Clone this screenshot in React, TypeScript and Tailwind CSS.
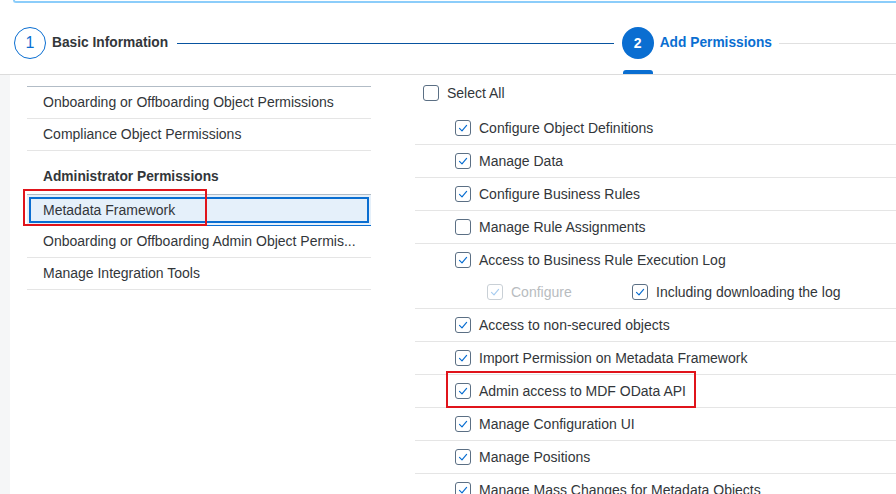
import React from "react";

type Perm = { label: string; checked: boolean; sub?: boolean; boxed?: boolean };

const perms: Perm[] = [
  { label: "Configure Object Definitions", checked: true },
  { label: "Manage Data", checked: true },
  { label: "Configure Business Rules", checked: true },
  { label: "Manage Rule Assignments", checked: false },
  { label: "Access to Business Rule Execution Log", checked: true, sub: true },
  { label: "Access to non-secured objects", checked: true },
  { label: "Import Permission on Metadata Framework", checked: true },
  { label: "Admin access to MDF OData API", checked: true, boxed: true },
  { label: "Manage Configuration UI", checked: true },
  { label: "Manage Positions", checked: true },
  { label: "Manage Mass Changes for Metadata Objects", checked: true },
];

function Checkbox({ checked, disabled }: { checked: boolean; disabled?: boolean }) {
  return (
    <span
      className={
        "flex h-[16px] w-[16px] shrink-0 items-center justify-center rounded-[3px] border bg-white " +
        (disabled ? "border-[#c9d0d6]" : "border-[#5b6f84]")
      }
    >
      {checked && (
        <svg width="12" height="12" viewBox="0 0 12 12" fill="none">
          <polyline
            points="2.5,6.3 5,8.8 9.6,3.4"
            stroke={disabled ? "#a9cdf0" : "#0a6ed1"}
            strokeWidth="1.2"
            strokeLinecap="round"
            strokeLinejoin="round"
          />
        </svg>
      )}
    </span>
  );
}

function Stepper() {
  return (
    <div className="border-b border-[#dcdcdc]">
      <div className="ml-[13px] h-[3px] rounded-bl-[6px] border-b-2 border-l-2 border-[#8ccdfa]" />
      <div className="flex h-[71px] items-start pt-[24px] pl-[14px]">
        <div className="flex h-[32px] w-full items-center">
          <span className="flex h-[32px] w-[32px] items-center justify-center rounded-full border border-[#0a6ed1] text-[16px] text-[#0a6ed1]">
            1
          </span>
          <span className="ml-[6px] text-[13.75px] font-bold text-[#32363a]">Basic Information</span>
          <span className="ml-[9px] mr-[8px] h-px flex-1 bg-[#0854a0]" />
          <div className="relative">
            <span className="flex h-[32px] w-[32px] items-center justify-center rounded-full bg-[#0a6ed1] text-[14px] font-bold text-white">
              2
            </span>
            <span className="absolute left-[1px] top-[43px] h-[4px] w-[30px] rounded-t-[3px] bg-[#0a6ed1]" />
          </div>
          <span className="ml-[6px] text-[13.75px] font-bold text-[#0a6ed1]">Add Permissions</span>
          <span className="ml-[7px] h-px w-[117px] bg-[#e0e0e0]" />
        </div>
      </div>
    </div>
  );
}

function LeftList() {
  const row = "flex h-[32px] items-center border-b border-[#e5e5e5] pl-[16px]";
  return (
    <div className="ml-[17px] mt-[11px] w-[344px] border-t border-[#b2bcc6]">
      <div className={row}>Onboarding or Offboarding Object Permissions</div>
      <div className={row}>Compliance Object Permissions</div>
      <div className="flex h-[44px] items-end border-b border-[#b2bcc6] pb-[6px] pl-[16px] text-[13.75px] font-bold">
        Administrator Permissions
      </div>
      <div className="relative h-[31px] border-b border-[#0a6ed1] bg-[#e5f0fa] p-[2px]">
        <div className="flex h-full items-center border-2 border-[#0a6ed1] pl-[12px]">Metadata Framework</div>
        <div className="absolute left-[-4px] top-[-6px] h-[37px] w-[184px] border-2 border-[#e0141b]" />
      </div>
      <div className={row}>Onboarding or Offboarding Admin Object Permis...</div>
      <div className={row}>Manage Integration Tools</div>
    </div>
  );
}

function RightList() {
  return (
    <div className="flex-1">
      <div className="flex h-[37px] items-center gap-[8px] pl-[8px] pb-[1px]">
        <Checkbox checked={false} />
        <span>Select All</span>
      </div>
      {perms.map((p) => (
        <div key={p.label} className="relative border-b border-[#e5e5e5] pl-[40px]">
          <div className="flex h-[32px] items-center gap-[8px]">
            <Checkbox checked={p.checked} />
            <span>{p.label}</span>
          </div>
          {p.sub && (
            <div className="flex h-[32px] items-center pl-[32px]">
              <div className="flex w-[145px] items-center gap-[8px]">
                <Checkbox checked disabled />
                <span className="text-[#b8bcc0]">Configure</span>
              </div>
              <div className="flex items-center gap-[8px]">
                <Checkbox checked />
                <span>Including downloading the log</span>
              </div>
            </div>
          )}
          {p.boxed && <div className="absolute left-[31px] top-[-4px] h-[37px] w-[250px] border-2 border-[#e0141b]" />}
        </div>
      ))}
    </div>
  );
}

export default function App() {
  return (
    <div
      className="h-[494px] w-[896px] overflow-hidden bg-white text-[14px] text-[#32363a]"
      style={{ fontFamily: '"Liberation Sans", Arial, sans-serif' }}
    >
      <Stepper />
      <div className="flex h-[419px]">
        <div className="w-[10px] bg-[#f5f6f7]" />
        <LeftList />
        <div className="w-[44px]" />
        <RightList />
      </div>
    </div>
  );
}
